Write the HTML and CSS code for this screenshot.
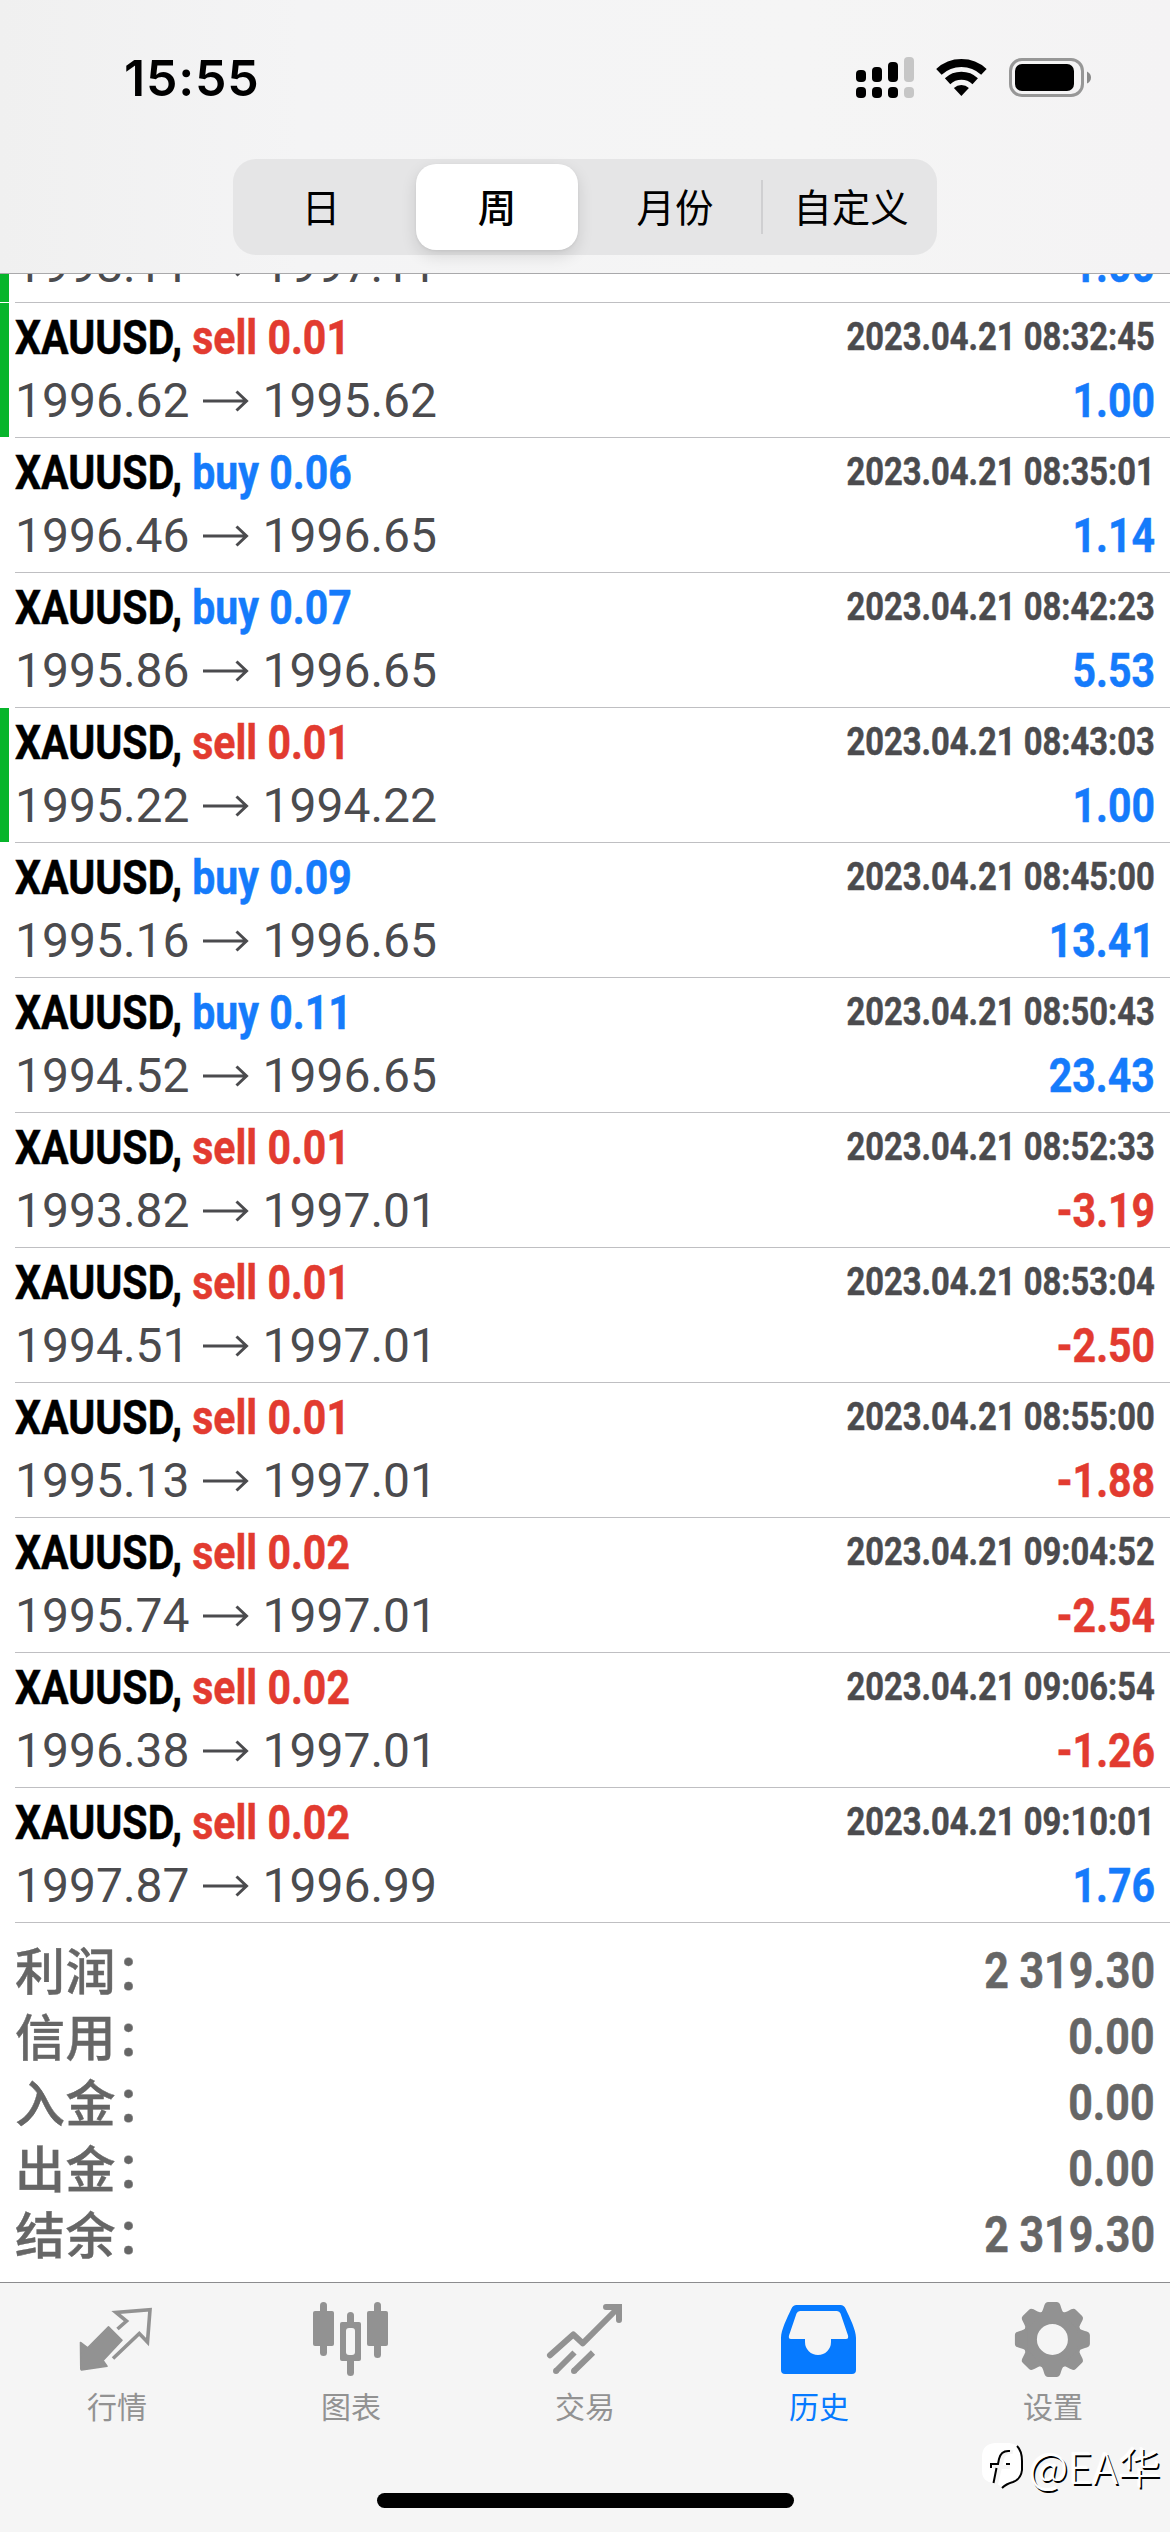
FILE: index.html
```html
<!DOCTYPE html>
<html lang="zh-CN">
<head>
<meta charset="utf-8">
<title>历史</title>
<link rel="stylesheet" href="styles.css">
</head>
<body>
<svg width="0" height="0" class="defs">
  <symbol id="arrow" viewBox="0 0 46 24"><path d="M0 12H43M33.500 2.500L43.500 12L33.500 21.500" fill="none" stroke="currentColor" stroke-width="3"/></symbol>
</svg>
<div class="screen">
  <header class="header">
    <div class="status">
      <span class="time">15:55</span>
      <svg class="status-icons" viewBox="0 0 236 44" width="236" height="44">
        <g>
          <rect x="0" y="14" width="10" height="12" rx="4"/><rect x="16" y="11" width="10" height="15" rx="4"/><rect x="32" y="6" width="10" height="20" rx="4"/>
          <rect x="0" y="31" width="10" height="11" rx="4"/><rect x="16" y="31" width="10" height="11" rx="4"/><rect x="32" y="31" width="10" height="11" rx="4"/>
          <g fill="#c6c6c6"><rect x="48" y="1" width="10" height="25" rx="4"/><rect x="48" y="31" width="10" height="11" rx="4"/></g>
        </g>
        <g transform="translate(105.400 40)" fill="none" stroke="#000" stroke-width="8">
          <path d="M-22.500 -24.100A33 33 0 0 1 22.500 -24.100"/>
          <path d="M-13.800 -14.800A20.300 20.300 0 0 1 13.800 -14.800"/>
          <path d="M0 0L-7.500 -8A11 11 0 0 1 7.500 -8Z" fill="#000" stroke="none"/>
        </g>
        <rect x="154.500" y="3.500" width="72" height="36" rx="11.500" fill="none" stroke="#979797" stroke-width="3"/>
        <rect x="159" y="8" width="59" height="27" rx="7"/>
        <path d="M231 15.500Q235 17.500 235 21.500T231 27.500Z" fill="#8a8a8a"/>
      </svg>
    </div>
    <nav class="segments">
      <span class="seg">日</span>
      <span class="seg seg-on">周</span>
      <span class="seg seg-month">月份</span>
      <span class="seg seg-custom">自定义</span>
    </nav>
  </header>

  <main class="content">
    <ul class="deals">
      <li class="deal marked deal-partial">
        <div class="line"><span class="price">1998.11<svg class="arr"><use href="#arrow"/></svg>1997.11</span><span class="value up">1.00</span></div>
      </li>
      <li class="deal marked">
        <div class="line"><span class="name">XAUUSD, <b class="sell">sell 0.01</b></span><time class="date">2023.04.21 08:32:45</time></div>
        <div class="line"><span class="price">1996.62<svg class="arr"><use href="#arrow"/></svg>1995.62</span><span class="value up">1.00</span></div>
      </li>
      <li class="deal">
        <div class="line"><span class="name">XAUUSD, <b class="buy">buy 0.06</b></span><time class="date">2023.04.21 08:35:01</time></div>
        <div class="line"><span class="price">1996.46<svg class="arr"><use href="#arrow"/></svg>1996.65</span><span class="value up">1.14</span></div>
      </li>
      <li class="deal">
        <div class="line"><span class="name">XAUUSD, <b class="buy">buy 0.07</b></span><time class="date">2023.04.21 08:42:23</time></div>
        <div class="line"><span class="price">1995.86<svg class="arr"><use href="#arrow"/></svg>1996.65</span><span class="value up">5.53</span></div>
      </li>
      <li class="deal marked">
        <div class="line"><span class="name">XAUUSD, <b class="sell">sell 0.01</b></span><time class="date">2023.04.21 08:43:03</time></div>
        <div class="line"><span class="price">1995.22<svg class="arr"><use href="#arrow"/></svg>1994.22</span><span class="value up">1.00</span></div>
      </li>
      <li class="deal">
        <div class="line"><span class="name">XAUUSD, <b class="buy">buy 0.09</b></span><time class="date">2023.04.21 08:45:00</time></div>
        <div class="line"><span class="price">1995.16<svg class="arr"><use href="#arrow"/></svg>1996.65</span><span class="value up">13.41</span></div>
      </li>
      <li class="deal">
        <div class="line"><span class="name">XAUUSD, <b class="buy">buy 0.11</b></span><time class="date">2023.04.21 08:50:43</time></div>
        <div class="line"><span class="price">1994.52<svg class="arr"><use href="#arrow"/></svg>1996.65</span><span class="value up">23.43</span></div>
      </li>
      <li class="deal">
        <div class="line"><span class="name">XAUUSD, <b class="sell">sell 0.01</b></span><time class="date">2023.04.21 08:52:33</time></div>
        <div class="line"><span class="price">1993.82<svg class="arr"><use href="#arrow"/></svg>1997.01</span><span class="value down">-3.19</span></div>
      </li>
      <li class="deal">
        <div class="line"><span class="name">XAUUSD, <b class="sell">sell 0.01</b></span><time class="date">2023.04.21 08:53:04</time></div>
        <div class="line"><span class="price">1994.51<svg class="arr"><use href="#arrow"/></svg>1997.01</span><span class="value down">-2.50</span></div>
      </li>
      <li class="deal">
        <div class="line"><span class="name">XAUUSD, <b class="sell">sell 0.01</b></span><time class="date">2023.04.21 08:55:00</time></div>
        <div class="line"><span class="price">1995.13<svg class="arr"><use href="#arrow"/></svg>1997.01</span><span class="value down">-1.88</span></div>
      </li>
      <li class="deal">
        <div class="line"><span class="name">XAUUSD, <b class="sell">sell 0.02</b></span><time class="date">2023.04.21 09:04:52</time></div>
        <div class="line"><span class="price">1995.74<svg class="arr"><use href="#arrow"/></svg>1997.01</span><span class="value down">-2.54</span></div>
      </li>
      <li class="deal">
        <div class="line"><span class="name">XAUUSD, <b class="sell">sell 0.02</b></span><time class="date">2023.04.21 09:06:54</time></div>
        <div class="line"><span class="price">1996.38<svg class="arr"><use href="#arrow"/></svg>1997.01</span><span class="value down">-1.26</span></div>
      </li>
      <li class="deal">
        <div class="line"><span class="name">XAUUSD, <b class="sell">sell 0.02</b></span><time class="date">2023.04.21 09:10:01</time></div>
        <div class="line"><span class="price">1997.87<svg class="arr"><use href="#arrow"/></svg>1996.99</span><span class="value up">1.76</span></div>
      </li>
    </ul>
    <dl class="totals">
      <div class="total"><dt>利润：</dt><dd>2 319.30</dd></div>
      <div class="total"><dt>信用：</dt><dd>0.00</dd></div>
      <div class="total"><dt>入金：</dt><dd>0.00</dd></div>
      <div class="total"><dt>出金：</dt><dd>0.00</dd></div>
      <div class="total"><dt>结余：</dt><dd>2 319.30</dd></div>
    </dl>
  </main>

  <nav class="tabs">
    <div class="tab">
      <svg class="icon" viewBox="0 0 80 80">
        <path d="M3.500 42.500L10.700 47.800L31.500 26.800L45 40.200L26 60.500L30 66.300L4.500 70L3.800 69Z" fill="currentColor" stroke="currentColor" stroke-width="1.600" stroke-linejoin="round"/>
        <path d="M40.500 29L49.500 21L39 12.500L73 9.800L70.500 42L62.300 33.500L36 58.500" fill="none" stroke="currentColor" stroke-width="3.600"/>
      </svg>
      <span>行情</span>
    </div>
    <div class="tab">
      <svg class="icon" viewBox="0 0 80 80" fill="currentColor">
        <rect x="2" y="11" width="21" height="35" rx="2"/><rect x="9" y="2" width="7" height="54" rx="3.500"/>
        <rect x="29" y="22" width="21" height="39" rx="2"/><rect x="36" y="12" width="7" height="64" rx="3.500"/>
        <rect x="35" y="28" width="9" height="27" rx="3" fill="#f5f5f5"/>
        <rect x="56" y="11" width="21" height="35" rx="2"/><rect x="63" y="2" width="7" height="56" rx="3.500"/>
      </svg>
      <span>图表</span>
    </div>
    <div class="tab">
      <svg class="icon" viewBox="0 0 80 80" fill="none" stroke="currentColor" stroke-width="6">
        <path d="M5 55.300L28.300 34.500L37.700 43.300L73 8" stroke-linecap="round" stroke-linejoin="round"/>
        <path d="M61 7H74V20" stroke-linecap="round"/>
        <path d="M11 71L29.500 52.500M29 71L48 52.500"/>
        <path d="M11 71h.01M29 71h.01" stroke-linecap="round"/>
      </svg>
      <span>交易</span>
    </div>
    <div class="tab tab-on">
      <svg class="icon" viewBox="0 0 80 80" fill="currentColor">
        <path fill-rule="evenodd" d="M17.500 5H61.500Q65 5 66.500 8.500C71 18 77 30 77 38V70Q77 74 73 74H6Q2 74 2 70V38C2 30 8 18 12.500 8.500Q14 5 17.500 5ZM21 11H58Q60.500 11 61.500 13.500L69 35.500Q69.800 39 67 39H52V42A13 13 0 0 1 26 42V39H12Q9.200 39 10 35.500L17.500 13.500Q18.500 11 21 11Z"/>
      </svg>
      <span>历史</span>
    </div>
    <div class="tab">
      <svg class="icon" viewBox="0 0 80 80">
        <g transform="translate(39.400 39.400)" fill="currentColor">
          <circle r="22.500" fill="none" stroke="currentColor" stroke-width="14"/>
          <g id="teeth">
            <path id="tooth" d="M-13 -25C-7.500 -28.500 -9.500 -37.500 -4.500 -37.500H4.500C9.500 -37.500 7.500 -28.500 13 -25Z"/>
            <use href="#tooth" transform="rotate(45)"/><use href="#tooth" transform="rotate(90)"/><use href="#tooth" transform="rotate(135)"/>
          </g>
          <use href="#teeth" transform="rotate(180)"/>
        </g>
      </svg>
      <span>设置</span>
    </div>
    <div class="home-bar"></div>
    <div class="watermark">
      <svg viewBox="0 0 48 52" width="48" height="52">
        <path d="M14 4H28Q41 5 41 20V30Q39 41 31 43Q25 45 21 50Q19 45 13 44Q1 43 1 32V18Q1 5 14 4Z" fill="#fff"/>
        <path d="M36 7Q41 12 41 22V31Q40 40 32 43Q25 45 21 49" fill="none" stroke="#000" stroke-width="2"/>
        <path d="M32 13Q23 11 21 20L15 45M12 28H29" fill="none" stroke="#f5f5f5" stroke-width="4"/>
        <path d="M29 12Q20 11 18 20L17 25H10V29M15.500 29L12.500 44M25 25h4" fill="none" stroke="#000" stroke-width="2"/>
      </svg>
      <span>@EA华</span>
    </div>
  </nav>
</div>
</body>
</html>
```
FILE: styles.css
```css
* { box-sizing: border-box; margin: 0; padding: 0; }

body {
  width: 1170px;
  background: #fff;
  font-family: Roboto, "Noto Sans CJK SC", sans-serif;
}

.defs { position: absolute; }

.screen {
  display: flex;
  flex-direction: column;
  height: 2532px;
  overflow: hidden;
}

/* Header */
.header {
  flex: none;
  height: 274px;
  background: linear-gradient(90deg, #f0f0f0 0, #f4f4f5 300px, #f5f5f5 800px, #f4f3f4 100%);
  border-bottom: 1px solid #a9a9ab;
}

.status {
  display: flex;
  justify-content: space-between;
  align-items: center;
  height: 159px;
  padding: 0 78px 3px 124px;
}

.time {
  font: 600 50px/60px Inter, sans-serif;
  letter-spacing: 0.8px;
}

.segments {
  display: flex;
  align-items: center;
  width: 704px;
  height: 96px;
  margin: 0 auto;
  border-radius: 23px;
  background: #e5e5e6;
}

.seg {
  display: flex;
  flex: none;
  align-items: center;
  justify-content: center;
  width: 176px;
  height: 86px;
  padding-bottom: 4px;
  font-size: 38.500px;
  color: #000;
}

.seg-on {
  width: 162px;
  margin: 0 7px;
  border-radius: 20px;
  background: #fff;
  font-weight: 500;
  box-shadow: 0 6px 16px rgba(0, 0, 0, 0.12), 0 1px 3px rgba(0, 0, 0, 0.06);
}

.seg-month { padding-left: 4px; }

.seg-custom {
  padding-left: 4px;
  background: linear-gradient(#cfcfd1, #cfcfd1) 0 16px / 2px 54px no-repeat;
}

/* Deals */
.content {
  flex: 1;
  overflow: hidden;
}

.deals {
  margin-top: -41px;
  list-style: none;
}

.deal {
  height: 135px;
  padding: 5px 15px 0;
  background: linear-gradient(#bfbfc2, #bfbfc2) 15px 100% / 100% 1px no-repeat;
}

.deal.marked {
  background:
    linear-gradient(#bfbfc2, #bfbfc2) 15px 100% / 100% 1px no-repeat,
    linear-gradient(#07b52b, #07b52b) 0 0 / 9px calc(100% - 1px) no-repeat;
}

/* Row scrolled under the header: only its price line is left */
.deal.deal-partial {
  height: 70px;
  padding-top: 0;
}

.line {
  display: flex;
  justify-content: space-between;
  height: 60px;
  white-space: nowrap;
}

.line + .line, .deal-partial .line { height: 66px; }

.name, .date, .value, .total dd {
  font-weight: 700;
  -webkit-text-stroke: 0.5px currentColor;
  transform: scaleX(0.85);
  transform-origin: 100% 0;
}

.name {
  font-size: 48.500px;
  line-height: 60px;
  transform: scaleX(0.846);
  transform-origin: 0 0;
  color: #000;
}

.name b { font-weight: 700; }

.date {
  font-size: 38.500px;
  line-height: 58px;
  color: #4b4b4e;
}

.price {
  display: flex;
  align-items: center;
  font-size: 48px;
  line-height: 66px;
  color: #4b4b4e;
}

.arr {
  width: 46px;
  height: 24px;
  margin: 0 14px 0 13px;
}

.value {
  font-size: 48.300px;
  line-height: 66px;
}

.buy, .up { color: #157bfb; }
.sell, .down { color: #e23b30; }

/* Totals */
.totals { padding: 13px 15px 0; }

.total {
  display: flex;
  justify-content: space-between;
  height: 66px;
  color: #666;
}

.total dt {
  font: 500 50px/64px "Noto Sans CJK SC", sans-serif;
  letter-spacing: 0.5px;
  -webkit-text-stroke: 0.4px currentColor;
}

.total dd {
  font-size: 50.500px;
  line-height: 70px;
}

/* Tab bar */
.tabs {
  position: relative;
  display: flex;
  flex: none;
  height: 250px;
  border-top: 1px solid #8c8c8e;
  background: #f5f5f5;
}

.tab {
  display: flex;
  flex-direction: column;
  align-items: center;
  width: 234px;
  padding-top: 17px;
  font-size: 30px;
  line-height: 44px;
  color: #929292;
}

.tab-on { color: #067aff; }

.icon {
  width: 80px;
  height: 80px;
  margin-bottom: 6px;
}

.home-bar {
  position: absolute;
  left: 377px;
  bottom: 24px;
  width: 417px;
  height: 15px;
  border-radius: 8px;
  background: #000;
}

.watermark {
  position: absolute;
  right: 9px;
  bottom: 37px;
  display: flex;
  align-items: center;
  font: 300 43px/60px "Noto Sans CJK SC", sans-serif;
  color: #fff;
  text-shadow: 1.500px 1.500px 0 #000, -1px -1px 1px #fff;
}
```
